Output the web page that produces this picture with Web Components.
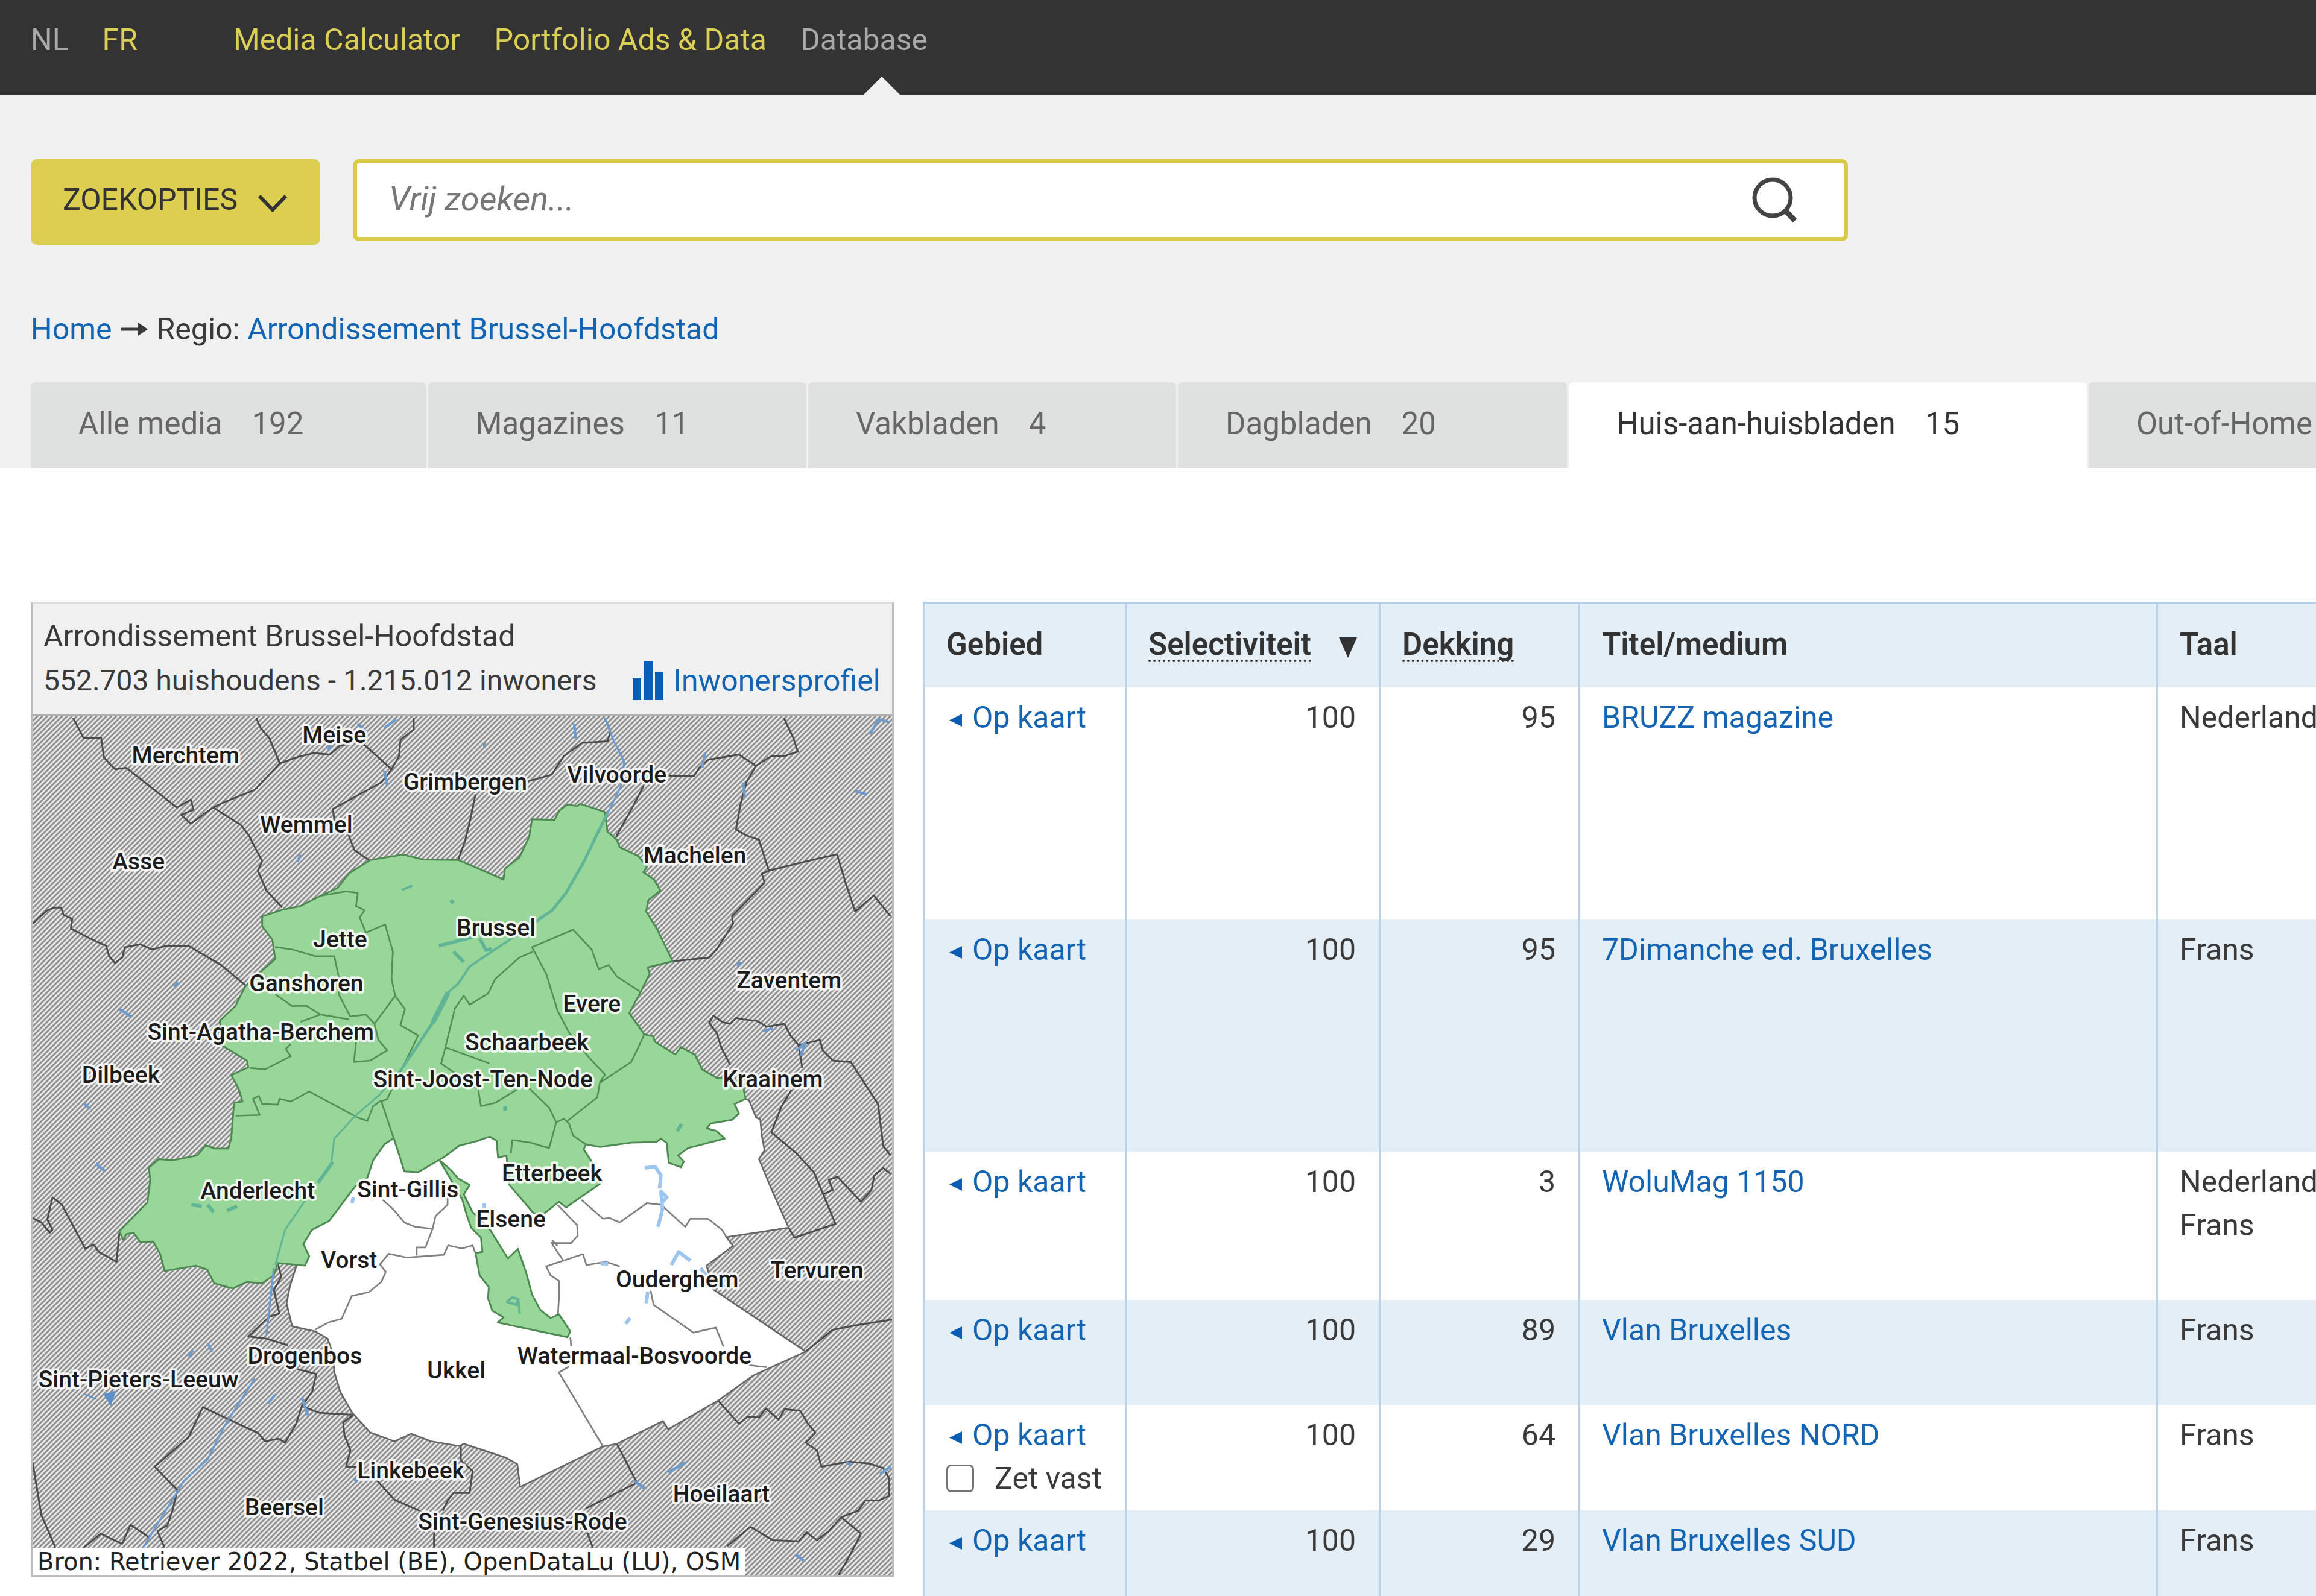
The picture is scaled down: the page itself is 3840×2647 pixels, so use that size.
<!DOCTYPE html>
<html lang="nl">
<head>
<meta charset="utf-8">
<meta name="viewport" content="width=device-width">
<title>Arrondissement Brussel-Hoofdstad</title>
<style>
  :root { --ink:#3a3a3a; --link:#1464b4; --accent:#dcce50; --panel:#f0f0f0; --tab:#dfe0e0; }
  body { margin:0; background:#fff; color:var(--ink); font:50px/60px Roboto,"Liberation Sans",sans-serif; overflow-x:hidden; }
  a { color:var(--link); text-decoration:none; }
</style>
</head>
<body>
<media-app>
  <site-nav slot="nav">
    <nav-link slot="lang" current>NL</nav-link>
    <nav-link slot="lang">FR</nav-link>
    <nav-link>Media Calculator</nav-link>
    <nav-link>Portfolio Ads &amp; Data</nav-link>
    <nav-link current pointer>Database</nav-link>
  </site-nav>
  <search-bar slot="top" placeholder="Vrij zoeken...">Zoekopties</search-bar>
  <crumb-trail slot="top"><a href="#home">Home</a><span>Regio: <a href="#regio">Arrondissement Brussel-Hoofdstad</a></span></crumb-trail>
  <media-tabs slot="top">
    <media-tab count="192" style="--w:655px">Alle media</media-tab>
    <media-tab count="11" style="--w:628px">Magazines</media-tab>
    <media-tab count="4" style="--w:610px">Vakbladen</media-tab>
    <media-tab count="20" style="--w:645px">Dagbladen</media-tab>
    <media-tab count="15" style="--w:859px" active>Huis-aan-huisbladen</media-tab>
    <media-tab style="--w:700px">Out-of-Home</media-tab>
  </media-tabs>
  <region-panel>
    <span slot="name">Arrondissement Brussel-Hoofdstad</span>
    <span slot="facts">552.703 huishoudens - 1.215.012 inwoners</span>
    <span slot="profile">Inwonersprofiel</span>
    <region-map></region-map>
    <span slot="source">Bron: Retriever 2022, Statbel (BE), OpenDataLu (LU), OSM</span>
  </region-panel>
  <media-table></media-table>
</media-app>

<script>
const define = (name, html, setup) => {
  const tpl = document.createElement('template');
  tpl.innerHTML = html;
  customElements.define(name, class extends HTMLElement {
    constructor() {
      super();
      this.attachShadow({ mode: 'open' }).append(tpl.content.cloneNode(true));
    }
    connectedCallback() { if (setup) setup(this, this.shadowRoot); }
  });
};

define('media-app', `
<style>
  :host { display:flex; flex-direction:column; min-height:100vh; overflow:hidden; }
  .top { background:var(--panel); padding:107px 51px 0; display:flex; flex-direction:column; }
  main { display:flex; gap:48px; padding:221px 0 0 51px; align-items:flex-start; }
</style>
<slot name="nav"></slot>
<div class="top"><slot name="top"></slot></div>
<main><slot></slot></main>`);

define('site-nav', `
<style>
  :host { display:block; background:#333; }
  nav { display:flex; height:157px; box-sizing:border-box; padding:36px 51px 0; }
  .lang, .main { display:flex; gap:56px; }
  .lang { width:336px; }
</style>
<nav><div class="lang"><slot name="lang"></slot></div><div class="main"><slot></slot></div></nav>`);

define('nav-link', `
<style>
  :host { display:block; position:relative; }
  a { color:#dccf55; text-decoration:none; }
  :host([current]) a { color:#a9a9a9; }
  :host([pointer])::after { content:""; position:absolute; left:64%; bottom:0; margin-left:-30px;
    border:30px solid transparent; border-top:0; border-bottom-color:var(--panel); }
</style>
<a href="#"><slot></slot></a>`);

define('search-bar', `
<style>
  :host { display:flex; gap:54px; align-items:flex-start; }
  button { font:inherit; color:#333; border:0; cursor:pointer; }
  .options { display:flex; gap:32px; align-items:center; justify-content:center; width:480px; height:142px; box-sizing:border-box;
    padding:0 0 8px; background:var(--accent); border-radius:10px; text-transform:uppercase; white-space:nowrap; }
  .chevron { width:52px; height:32px; flex:none; margin-top:12px; }
  form { flex:1; max-width:2479px; height:136px; margin-bottom:6px; box-sizing:border-box; display:flex; align-items:center;
    background:#fff; border:7px solid #dacb44; border-radius:10px; padding:0 74px 0 53px; }
  input { flex:1; min-width:0; border:0; outline:0; background:none; padding:0; margin-bottom:4px;
    font:italic 56px/64px Roboto,"Liberation Sans",sans-serif; color:#333; }
  input::placeholder { color:#777; opacity:1; }
  .go { background:none; padding:0; width:80px; height:80px; }
  .go svg { display:block; width:80px; height:80px; }
</style>
<button class="options" type="button"><slot></slot><svg class="chevron" viewBox="0 0 52 32" fill="none" stroke="#333" stroke-width="6"><path d="M4 4 26 27 48 4"/></svg></button>
<form><input type="search" aria-label="Vrij zoeken"><button class="go" type="button" aria-label="Zoek"><svg viewBox="0 0 80 80" fill="none" stroke="#444"><circle cx="36" cy="36" r="30" stroke-width="7"/><path d="M57 57 73 74" stroke-width="9"/></svg></button></form>`,
(host, root) => { root.querySelector('input').placeholder = host.getAttribute('placeholder'); });

define('crumb-trail', `
<style>
  :host { display:block; margin-top:110px; }
  nav { display:flex; gap:15px; align-items:center; }
  svg { order:1; width:44px; height:26px; }
  ::slotted(span) { order:2; }
</style>
<nav><slot></slot><svg viewBox="0 0 44 26" fill="none" stroke="#3a3a3a" stroke-width="5"><path d="M0 13H36"/><path d="M28 2 44 13 28 24z" fill="#3a3a3a" stroke="none"/></svg></nav>`);

define('media-tabs', `
<style>:host { display:flex; gap:3px; margin-top:58px; margin-right:-400px; font-size:51px; }</style>
<slot></slot>`);

define('media-tab', `
<style>
  :host { display:block; flex:0 0 var(--w); }
  a { display:flex; gap:49px; height:143px; box-sizing:border-box; padding:39px 0 0 79px; white-space:nowrap;
    background:var(--tab); color:#666; border-radius:8px 8px 0 0; text-decoration:none; }
  :host([active]) a { background:#fff; color:#333; }
</style>
<a href="#"><slot></slot><span class="count"></span></a>`,
(host, root) => { root.querySelector('.count').textContent = host.getAttribute('count') || ''; });

define('region-panel', `
<style>
  :host { display:block; flex:0 0 1431px; min-width:0; box-sizing:border-box; border:3px solid #bcbcbc; border-top-color:#dcdcdc; position:relative; }
  header { background:var(--panel); padding:17px 19px 19px 18px; line-height:74px; border-bottom:3px solid #b0b0b0; white-space:nowrap; }
  .row { display:flex; justify-content:space-between; }
  .facts { font-size:48px; }
  a { display:flex; gap:16px; align-items:center; color:var(--link); text-decoration:none; }
  svg { width:51px; height:66px; }
  .source { position:absolute; left:0; bottom:0; background:#fff; color:#222; padding:0 8px; white-space:nowrap;
    font:40px/46px "DejaVu Sans",sans-serif; }
</style>
<header>
  <div><slot name="name"></slot></div>
  <div class="row"><div class="facts"><slot name="facts"></slot></div><a href="#profiel"><svg viewBox="0 0 51 66" fill="#0a5db4"><path d="M0 29h14v36H0zM18 0h15v65H18zM37 18h14v47H37z"/></svg><slot name="profile"></slot></a></div>
</header>
<slot></slot>
<div class="source"><slot name="source"></slot></div>`);

const LABELS = [
  ['Merchtem',125,517],['Meise',226,503],['Grimbergen',315,535],['Vilvoorde',418,530],['Wemmel',207,564],
  ['Asse',93,589],['Machelen',471,585],['Jette',230,642],['Brussel',336,634],['Ganshoren',207,672],
  ['Sint-Agatha-Berchem',176,705],['Evere',401,686],['Schaarbeek',357,712],['Zaventem',535,670],
  ['Dilbeek',81,734],['Sint-Joost-Ten-Node',327,737],['Kraainem',524,737],['Anderlecht',174,813],
  ['Sint-Gillis',276,812],['Etterbeek',374,801],['Elsene',346,832],['Vorst',236,860],['Ouderghem',459,873],
  ['Tervuren',554,867],['Drogenbos',206,925],['Ukkel',309,935],['Watermaal-Bosvoorde',430,925],
  ['Sint-Pieters-Leeuw',93,941],['Linkebeek',278,1003],['Beersel',192,1028],['Sint-Genesius-Rode',354,1038],
  ['Hoeilaart',489,1019]
];

define('region-map', `
<style>
  :host { display:block; }
  svg { display:block; width:100%; height:auto; }
  path { stroke-linejoin:round; }
  text { font-family:Roboto,sans-serif; font-size:16px; font-weight:500; text-anchor:middle; fill:#1c1c1c;
    stroke:#fff; stroke-opacity:.85; stroke-width:3px; stroke-linejoin:round; paint-order:stroke; }
</style>
<svg viewBox="21 485 584 584" role="img" aria-label="Kaart van Arrondissement Brussel-Hoofdstad">
  <defs><pattern id="hatch" width="3.35" height="3.35" patternUnits="userSpaceOnUse">
    <rect width="3.35" height="3.35" fill="#ececec"/><path d="M-1 1 1 -1M-.5 3.85 3.85 -.5M2.35 4.35 4.35 2.35" stroke="#8c8c8c" stroke-width="1.2"/></pattern></defs>
  <rect x="21" y="485" width="584" height="584" fill="url(#hatch)"/>
  <g fill="none" stroke="#4c4c4c" stroke-width="1.2">
    <path d="M48.6 486 55.5 499.6 67.6 499.6 69.5 513 77 521 84.7 520 119 547 128.5 541.7 130.4 548.5 122 552 128.5 558 143.7 547 152 543 172 535 189 517 182 500 176 493 173 486"/>
    <path d="M189 517 200 513 212 510 223 511 230 505 235 504"/>
    <path d="M246 504 265 521 270 512 271 501 280 494 280 486"/>
    <path d="M265 521 258 530 225 548 226 555 235 564 239.8 576 249.5 582.7"/>
    <path d="M143.7 547 162.7 559 168 566 177 583.5 174 590 180 603.5 190.7 615"/>
    <path d="M322 538 318 557 314.8 570 310 583"/>
    <path d="M356.6 529.5 373.7 524.7 382 512 394.6 503 411.7 502 413.6 495.5 409.8 486"/>
    <path d="M453.5 525.4 470.6 525.4 474 520 480 514.5 501 511 512.5 518.6 523 512 532 512 541 509 538 500 531.5 486"/>
    <path d="M512.5 518.6 506 530 502 545 499 562 506 566 514.6 569 521.3 590 516.5 592 518.4 598 496.3 621 497 626 485.7 643.5 480.8 649 456 651.5"/>
    <path d="M521 590 545 584 567.6 578.8 574 600 580 617.7 592.6 606.8 604 621"/>
    <path d="M436.4 532 428 548 417.4 567"/>
    <path d="M21 626 30.8 617 36 615 40.4 615 42 620 48 622.7 47 629.3 60 636 71 641 73 648 77 652.7 82 649 83.7 642 94 640 102 643.5 112 641 127 641 149 654 165.6 667.7"/>
    <path d="M495 722 489 710 485.7 700 480.8 693.5 483.7 688.5 490 693 495 694 499 690 504 691 513 692 520 696 531.9 694 536 702 541.5 708.5 556 705 558 712 564.7 719 577 720 595.5 748.5 599 777 604 783.5"/>
    <path d="M541.5 708.5 544 724M536.7 739 530 750 523 767.7 540 782 552 795 566.6 830 538.6 839.4 534.8 832.6"/>
    <path d="M558 810 564.7 807 562 800 568 798 583.9 815 591 807 593 797 599 792 604 796"/>
    <path d="M541 913 546 917 564.7 902 580 899 605 895"/>
    <path d="M486.6 950 501 965.8 507 961 514.6 961.5 519.4 955.5 528 963 532 956 542.5 957 548 966 553 972 546.4 978.7 554 984 557 995 576 991.6 590 993 599 996 603 1003 603 1014.8 596 1018 586.8 1018 582 1025 570.4 1029.4 562 1039 554 1045 547 1039.7 541.5 1045.7 524 1045 508.8 1036 493 1049"/>
    <path d="M570.4 1029.4 584 1040.6 576 1056 568.5 1069"/>
    <path d="M418 979.5 431.7 1006 397 1023.4M398 1040 402 1051"/>
    <path d="M21 826 27 829 32.7 836 34.6 834 31 827 34.6 812 41 817 56.8 847 62.5 844 66 849 78 855.8 80 836"/>
    <path d="M187.8 857.5 190 866 185 875 188.8 891 182 893 167.6 906.5 180 908 194.5 912.5"/>
    <path d="M201 928.8 213.8 932 211 944 204 953.8 215.7 958.4 238.9 959.8 232 965 233 974 237 984 234 995 241 995"/>
    <path d="M204 953.8 200 966 192.6 978.7 188 976 179 977.8 174 972 136.7 954.6 127 975 104 995 119.4 1011 116 1025 112.6 1035 105.9 1038.8 110.7 1050"/>
    <path d="M55.8 1050 67.4 1040.6 81.8 1047.4 87.6 1034.6 100 1043"/>
    <path d="M21 992 27 1028 36.5 1050M255 1004.5 266.8 1017.4 284 1025M299.6 1025 303 1018 307 1013 318 1013 320 998 312 990.7 312 980M293.8 1040V1050"/>
  </g>
  <path d="M505 745 507.8 746 512.6 757.7 515.5 759 516.5 770 518.4 780 514.6 786 524 808.5 534.8 832.6 492.4 839 497 845 479 858.4 483.7 874.7 546.4 916.8 520 928.8 510.7 933 486.6 950.3 452.9 969.6 449.4 964 418 979.5 408.6 981.3 352.3 1008.8 350.4 993.3 343 989 314 979.5 311 981 291.9 977.8 278.4 972.7 266.8 977.8 250.4 971.8 237.9 958 230 944 226 930.5 225 918 221.5 908 212.9 903 197.4 899.6 193.6 884 196 872 200.3 858.4 210 800 400 700Z" fill="#fff" stroke="#666" stroke-width="1.1"/>
  <g fill="none" stroke="#808080" stroke-width="1.1">
    <path d="M259 813.7 266 820 273.6 829 281 832 292.8 833.4 294.8 824.8 303 817V811M292.8 833.4 288 846 282 846V851.5"/>
    <path d="M212.9 902 222 897 231 894.5 237.9 879 249.5 876.4 258 869.5 261 862.6 257 857.5 263 850.3 275.5 852.9 300.5 851 303.4 844.6 313 846.7 320 844.6 322 850"/>
    <path d="M377.7 817 391 830.8 391.5 838 387 843 377.7 843 373.5 842.9 381.6 854.9M377.7 845 374 841"/>
    <path d="M420 858.9 410.5 855.8 397.4 858 395 850.6 370 858.9 373 865 378.7 868.7V880L378 891.5"/>
    <path d="M394 813.7 408.6 826.5 413 826 420 829 438.4 815.9 448 817 464.5 832 468 826.5 479.9 826.5 489.5 834 492.4 839"/>
    <path d="M441 875.5 443 885 470 903.9 485.3 900.5 490.5 913.4M507.8 926 520 927.5M386.4 907 387 913M385.5 927 378.7 931 408.6 981.3"/>
  </g>
  <path d="M250.4 582.7 272.6 579 286 582.3 310.3 582.7 325 589 341 596 342 588.5 351.7 581 358.5 566.8 360.4 555 375.6 555.4 379 549 384.3 545 391 546 393 544.5 409.8 550 411.7 563.5 418 569 420 574 432.7 580 438.4 587.7 436 591 443.3 596 447.7 603.5 439.4 610 437.9 617.7 445 629 456 651.5 439 655.7 440.4 660 433.6 673.5 426.5 686.8 436.5 701 443 702.7 443.6 706 457.7 714.8 461.6 709.8 471 715 476 725 485.7 730.7 503 733 505.5 745 498 748.5 501 755 496.3 759.3 481.8 761.8 479 765 485.7 766.8 491.4 772 466.4 778.5 459.6 783.5 463.5 787.7 461.6 791.5 453.3 788.5 451.9 775 448 772 445 774.3 427.8 774.8 406.6 777.7 397 776 395.5 779.3 400.9 787.7 406.6 802.7 383.5 818.8 378.7 815 368 823.5 361.4 822.7 345 803.5 343 783.5 337.3 785 336.3 773.5 331.5 770.7 322.8 773.8 311 776.8 300 785 283 794.8 273.6 794.3 270.7 785 266.4 771.8 260 776 252.4 786.8 248.5 798.5 239.8 805 230 818 222.5 828 210.9 834 205 843.7 209 852 206 858.4 187.8 856.6 184.9 865 177 870.4 166.6 869.5 157 874 144.4 870.4 139.6 861 131.9 858.4 110.7 862 107.8 850.6 103 842 94.3 842.5 89.5 836 84.7 837 82.8 841 79.9 835 99 815.4 101 800 100 791.8 106.9 786 116.5 786.8 132.9 783.5 138.7 776.5 144.4 778.8 154 778.8 156 771.8 157.9 747.7 163.7 746.8 161 738 156 729 167.6 723.5 166.6 719 149.3 708.5 148.3 691.8 158.9 681.8 165.6 668.5 177 657.7 185.9 650 183.9 636.8 177 627.7V621L190.7 616.5 203 614 216.7 607 228 601.8 236 591.8Z
    M297.6 786.8 303.4 796.8 313 813.5 316 824 319 832.6 325.7 839.4 326.7 849 322 849.8 324.8 865 331 873 330.5 880.7 333.4 889 341 893.6 337 897 384.5 907 386.4 903 378.7 891.5 373 894 366 888.4 360.4 878 356.5 863.5 350.8 847 344 853.5 331.5 833.4 320 822 314 810 318 803.5 310 799 305.4 793.5Z" fill="#99d699" stroke="#4d8a52" stroke-width="1.2"/>
  <g fill="none" stroke="#4f9156" stroke-width="1.1">
    <path d="M216.7 607 234 604 242 605 240.8 614 246.6 616.8 243.3 621.8 247.5 632 260.6 626.5 265.8 645 264.9 663.5 267.4 675 253.3 694 256 705 262 712 250.4 719 239.4 720 240.8 706.8"/>
    <path d="M267.4 675 274 684 271 695 283 702 262 745 258 746.8 266.4 771.8M258 746 252.4 750 248.5 760 241.8 757.7 209 740 196.5 746.8 188.8 745 187.8 749 177 748.5 174.7 743 170.8 745 175.3 756 158.9 756.5"/>
    <path d="M185.9 641.8 197.4 643.5 212.9 648 226 648 229 661.8V674L236.9 689 247.5 687.7 253.3 694M185.9 674 197.4 682 207 681.8 216.7 687.7 236 691M203 692.7 216.7 687.7M196.5 707.7 193 711 196.5 716 179 725 168.5 724"/>
    <path d="M323 738 298.6 721 301.5 710 308 683.5 314 675 318 681 330.5 673.5 335.4 663.5 351.7 649 360.8 645M301.5 710 331.5 721"/>
    <path d="M433.6 672 418 661.8 412.4 654 405.7 656.8 400.9 643.5 388.3 630 360.4 642 370 660 377.7 685 385.5 700 399 716.8 410 728.5 406.6 733.5 404.7 744 384.5 760M436.5 701.8 427.8 720 406.6 734"/>
    <path d="M323.8 738.5 325.7 750 335.4 747.7 351.7 737.7M358.5 738 372 751 376.8 761 382 758.5 385.5 761.8 388.3 770 397 776M376.8 761 372 778.5 359.4 774.8 347 773 346 782"/>
  </g>
  <g fill="none" stroke="#6c9bd0" stroke-width="1.3">
    <path d="M409.8 486 416 502 423 516 421 532 411.7 551M184.9 860 180 905M172 935 151 968 140 990 124 1004.5 101 1042 96 1050"/>
    <path d="M242 490 248 496M260 493 268 487M389 490 390 500M590 497 596 487 603 489M478 510 476 520M504 530 505 540M580 536 588 538M222 508 224 503M260 522 262 532M328 503V506M201 584 203 579M80 684 88 689M56 748 60 752M64 789 70 794M117 669 120 666M500 655 502 652M518 699 524 697M540 712 546 707 543 716M127 920 130 916M140 911 143 917M204 948 208 960M181 952 186 946M240 1003 241 1006" stroke-width="1.8"/>
    <path d="M453 999 465 992M430 1005 437 1010M574 992 577 994M597 1000 604 995M540 1055 545 1059" stroke-width="2"/>
  </g>
  <path d="M70 946 77 944 74 953ZM57 946 64 949Z" fill="#5b8fc9" stroke="#5b8fc9" stroke-width="1"/>
  <g fill="none" stroke="#60b596" stroke-width="1.2">
    <path d="M411.5 551 404.7 565 395 585 383.5 605 374 617 363 624.5" stroke-width="2"/>
    <path d="M363 624.5 345 637 318 655 310 667 303 673" stroke-width="1.6"/><path d="M303.4 672.7 292.8 693.5" stroke-width="3.4"/>
    <path d="M292.8 693.5 272.6 723.5" stroke-width="2"/>
    <path d="M272.6 723.5 257 742 239.8 757 226 772 224 788M209 810 192.6 834 185.9 858"/>
    <path d="M225 788 215 802M297 641 305 639 320 635M307 645 314 652M325 636 329 644 333 643M342 750V753M459 767 462 762M305 610 307 612M129 817 136 818M140 817 144 822M153 821 160 818" stroke-width="2.4"/>
    <path d="M272 603 279 600M343 883 347 880 351 881 352 891M343 883 350 885 351 881" stroke-width="1.6"/>
  </g>
  <path d="M437 792 444 791 448 797 447 806M449 815 452 812 448 808 449 820 446 832M455 858 460 849 468 855M475 860 480 867M439 876 438 884M424 898 427 894M238 816 239 812M328 816V820M407 857 412 857" fill="none" stroke="#9cc6f0" stroke-width="2.4"/>
  <g class="labels"></g>
</svg>`,
(host, root) => {
  const g = root.querySelector('.labels');
  for (const [name, x, y] of LABELS) {
    const t = document.createElementNS('http://www.w3.org/2000/svg', 'text');
    t.setAttribute('x', x); t.setAttribute('y', y); t.textContent = name;
    g.append(t);
  }
});

const ROWS = [
  [385, 100, 95, 'BRUZZ magazine', 'Nederlands'],
  [385, 100, 95, '7Dimanche ed. Bruxelles', 'Frans'],
  [246, 100, 3, 'WoluMag 1150', 'Nederlands<br>Frans'],
  [174, 100, 89, 'Vlan Bruxelles', 'Frans'],
  [175, 100, 64, 'Vlan Bruxelles NORD', 'Frans', true],
  [142, 100, 29, 'Vlan Bruxelles SUD', 'Frans']
];
const mapCell = pin => `<a href="#kaart"><svg viewBox="0 0 20 20" fill="#0a5db4"><path d="M0 10 20 0V20z"/></svg>Op kaart</a>` +
  (pin ? `<label><input type="checkbox">Zet vast</label>` : '');

define('media-table', `
<style>
  :host { display:block; flex:1; min-width:0; overflow:hidden; }
  table { table-layout:fixed; width:2645px; border-spacing:0; border-top:3px solid #b4cfe9; line-height:72px; }
  th, td { box-sizing:border-box; border-left:3px solid #b9d1e9; padding:14px 38px 0 36px; vertical-align:top; text-align:left; white-space:nowrap; }
  th { height:139px; padding-top:32px; background:#e4eef7; color:#333; font-size:51px; font-weight:600; }
  tbody tr:nth-child(even) { background:#e4eef7; }
  .num { text-align:right; }
  th.sort { display:flex; justify-content:space-between; padding-right:36px; }
  abbr { text-decoration:underline dotted 4px; text-underline-offset:8px; text-decoration-skip-ink:none; }
  a { color:var(--link); text-decoration:none; }
  td a svg { width:21px; height:21px; margin:0 17px 2px 5px; }
  .arrow { width:30px; height:34px; margin-top:24px; }
  label { display:flex; align-items:center; gap:34px; }
  input { appearance:none; width:46px; height:46px; margin:0; background:#fff; border:3px solid #757575; border-radius:8px; }
</style>
<table>
  <colgroup><col style="width:335px"><col style="width:421px"><col style="width:331px"><col style="width:958px"><col></colgroup>
  <thead><tr><th>Gebied</th><th class="sort"><abbr>Selectiviteit</abbr><svg class="arrow" viewBox="0 0 30 34" fill="#333"><path d="M0 0H30L15 34z"/></svg></th><th><abbr>Dekking</abbr></th><th>Titel/medium</th><th>Taal</th></tr></thead>
  <tbody>${ROWS.map(([h, sel, dek, title, lang, pin]) => `<tr style="height:${h}px"><td>${mapCell(pin)}</td><td class="num">${sel}</td><td class="num">${dek}</td><td><a href="#medium">${title}</a></td><td>${lang}</td></tr>`).join('')}</tbody>
</table>`);
</script>
</body>
</html>
